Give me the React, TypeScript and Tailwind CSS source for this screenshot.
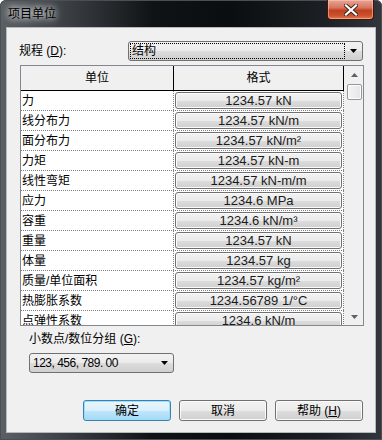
const rows: [string, string][] = [
  ['力', '1234.57 kN'],
  ['线分布力', '1234.57 kN/m'],
  ['面分布力', '1234.57 kN/m²'],
  ['力矩', '1234.57 kN-m'],
  ['线性弯矩', '1234.57 kN-m/m'],
  ['应力', '1234.6 MPa'],
  ['容重', '1234.6 kN/m³'],
  ['重量', '1234.57 kN'],
  ['体量', '1234.57 kg'],
  ['质量/单位面积', '1234.57 kg/m²'],
  ['热膨胀系数', '1234.56789 1/°C'],
  ['点弹性系数', '1234.6 kN/m'],
]

function DownArrow() {
  return (
    <svg width="7" height="4" viewBox="0 0 7 4">
      <path d="M0 0H7L3.5 4Z" fill="#000" />
    </svg>
  )
}

function PushButton({ children, primary }: { children: React.ReactNode; primary?: boolean }) {
  return (
    <div
      className={
        primary
          ? "flex h-[21px] w-[88px] items-center justify-center rounded-[3px] border border-[#3c7fb1] bg-[linear-gradient(to_bottom,#eaf6fd_0%,#d9f0fc_50%,#bee6fd_51%,#a7d9f5_100%)] shadow-[inset_0_0_0_1px_#9be0fb] text-[12px] leading-[16px] text-black font-['Liberation_Sans','Noto_Sans_CJK_SC',sans-serif]"
          : "flex h-[21px] w-[88px] items-center justify-center rounded-[3px] border border-[#707070] bg-[linear-gradient(to_bottom,#f2f2f2_0%,#ebebeb_50%,#dddddd_51%,#cfcfcf_100%)] shadow-[inset_0_0_0_1px_#fbfbfb] text-[12px] leading-[16px] text-black font-['Liberation_Sans','Noto_Sans_CJK_SC',sans-serif]"
      }
    >
      {children}
    </div>
  )
}

function UnitsTable() {
  return (
    <div className="ml-[13px] mt-[4px] flex h-[261px] w-[344px] border border-[#828790] bg-white">
      <div className="flex w-[323px] flex-col overflow-hidden">
        <div className="flex h-[25px] shrink-0 border-b border-black bg-[#f0f0f0] text-[12px] leading-[16px] text-black font-['Liberation_Sans','Noto_Sans_CJK_SC',sans-serif]">
          <div className="flex w-[153px] items-center justify-center border-r border-black">单位</div>
          <div className="flex w-[170px] items-center justify-center border-r border-black">格式</div>
        </div>
        {rows.map(([name, fmt]) => (
          <div key={name} className="flex h-[20px] shrink-0 border-b border-dotted border-[#808080]">
            <div className="flex w-[153px] items-center border-r border-dotted border-[#808080] pl-[1px] text-[12px] leading-[16px] text-black font-['Liberation_Sans','Noto_Sans_CJK_SC',sans-serif]">
              {name}
            </div>
            <div className="flex w-[170px] border-r border-dotted border-[#808080] py-[1px] pl-[1px] pr-[1px]">
              <div className="flex h-[17px] flex-1 items-center justify-center rounded-[3px] border border-[#707070] bg-[linear-gradient(to_bottom,#f2f2f2_0%,#ebebeb_50%,#dddddd_51%,#cfcfcf_100%)] shadow-[inset_0_0_0_1px_#fbfbfb] text-[13px] leading-[15px] text-[#1a1a1a] font-['Liberation_Sans',sans-serif]">
                {fmt}
              </div>
            </div>
          </div>
        ))}
      </div>
      <div className="flex w-[19px] flex-col border-l border-[#f0f0f0] bg-[#f0f0f0] pl-[1px]">
        <div className="flex h-[17px] items-center justify-center">
          <svg width="7" height="4" viewBox="0 0 7 4">
            <path d="M0 4H7L3.5 0Z" fill="#606060" />
          </svg>
        </div>
        <div className="ml-[1px] mt-[1px] h-[16px] w-[15px] rounded-[2px] border border-[#979797] bg-[linear-gradient(to_right,#f4f4f4,#e6e6e6)] shadow-[inset_0_0_0_1px_#fcfcfc]" />
        <div className="flex-1" />
        <div className="flex h-[17px] items-center justify-center">
          <svg width="7" height="4" viewBox="0 0 7 4">
            <path d="M0 0H7L3.5 4Z" fill="#606060" />
          </svg>
        </div>
      </div>
    </div>
  )
}

export default function App() {
  return (
    <div className="flex h-[440px] w-[382px] flex-col overflow-hidden rounded-t-[6px] bg-[linear-gradient(90deg,#5b6065_0%,#3a3e42_18%,#101316_40%,#0b0e10_60%,#1c2024_85%,#33373b_100%)] shadow-[inset_0_0_0_1px_#4a4f54]">
      <div className="flex h-[27px] shrink-0 items-start justify-between">
        <span className="ml-[8px] mt-[6px] text-[12px] leading-[16px] text-black font-['Liberation_Sans','Noto_Sans_CJK_SC',sans-serif] [text-shadow:0_0_6px_#ffffff,0_0_10px_rgba(255,255,255,0.8)]">
          项目单位
        </span>
        <div className="mr-[8px] flex h-[20px] w-[47px] items-center justify-center rounded-b-[4px] border border-t-0 border-[#47140b] bg-[linear-gradient(to_bottom,#e8a596_0%,#d7765f_40%,#c2401f_55%,#c9502c_80%,#dd7a4f_100%)] shadow-[inset_0_0_0_1px_rgba(255,210,190,0.5)]">
          <svg width="14" height="12" viewBox="0 0 14 12">
            <path d="M2 1.5L12 10.5M12 1.5L2 10.5" stroke="#3b2420" strokeWidth="4" strokeLinecap="square" />
            <path d="M2 1.5L12 10.5M12 1.5L2 10.5" stroke="#ffffff" strokeWidth="2.2" strokeLinecap="square" />
          </svg>
        </div>
      </div>
      <div className="mx-[6px] flex h-[406px] shrink-0 flex-col border border-[#b5b9bd] bg-[#f0f0f0]">
        <div className="flex pt-[13px]">
          <div className="flex h-[20px] w-[121px] items-center pl-[12px] text-[12px] leading-[16px] text-black font-['Liberation_Sans','Noto_Sans_CJK_SC',sans-serif]">
            规程 (<u>D</u>):
          </div>
          <div className="flex h-[20px] w-[235px] items-center rounded-[3px] border border-[#707070] bg-[linear-gradient(to_bottom,#f2f2f2_0%,#ebebeb_50%,#dddddd_51%,#cfcfcf_100%)] pl-[1px] pr-[5px]">
            <div className="flex h-[16px] w-[215px] items-center border border-dotted border-black pl-[1px] text-[12px] leading-[16px] text-black font-['Liberation_Sans','Noto_Sans_CJK_SC',sans-serif]">
              结构
            </div>
            <div className="flex flex-1 justify-end">
              <DownArrow />
            </div>
          </div>
        </div>
        <UnitsTable />
        <div className="ml-[22px] mt-[5px] text-[12px] leading-[16px] text-black font-['Liberation_Sans','Noto_Sans_CJK_SC',sans-serif]">
          小数点/数位分组 (<u>G</u>):
        </div>
        <div className="ml-[22px] mt-[6px] flex h-[20px] w-[145px] items-center rounded-[3px] border border-[#707070] bg-[linear-gradient(to_bottom,#f2f2f2_0%,#ebebeb_50%,#dddddd_51%,#cfcfcf_100%)] pl-[3px] pr-[5px]">
          <span className="flex-1 text-[12px] leading-[16px] tracking-[-0.5px] text-black font-['Liberation_Sans',sans-serif]">
            123, 456, 789. 00
          </span>
          <DownArrow />
        </div>
        <div className="mt-auto flex justify-end gap-[8px] pb-[11px] pr-[12px]">
          <PushButton primary>确定</PushButton>
          <PushButton>取消</PushButton>
          <PushButton>
            帮助 (<u>H</u>)
          </PushButton>
        </div>
      </div>
    </div>
  )
}
